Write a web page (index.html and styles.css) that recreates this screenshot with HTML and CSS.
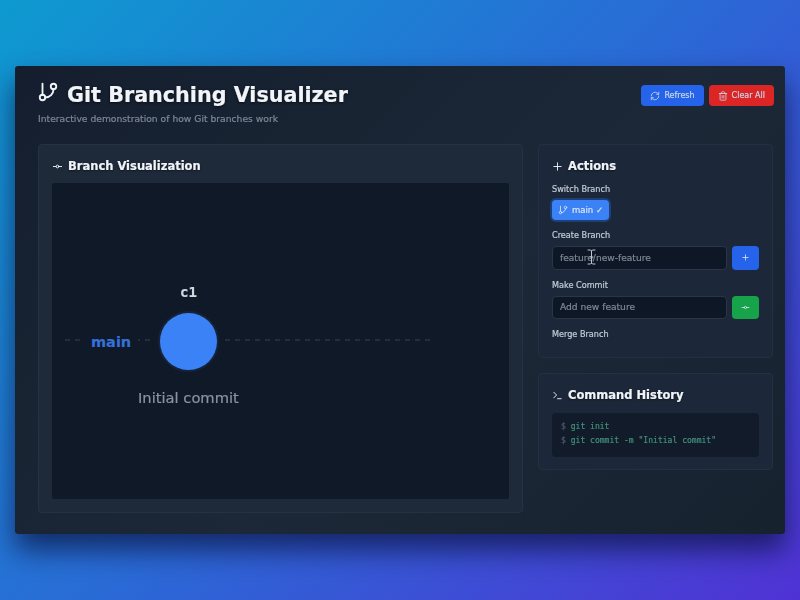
FILE: index.html
```html
<!DOCTYPE html>
<html lang="en">
<head>
  <meta charset="UTF-8" />
  <title>Git Branching Visualizer</title>
  <link rel="stylesheet" href="styles.css">
</head>
<body>
  <div class="window">
    <header class="top">
      <div>
        <h1>
          <svg class="logo" viewBox="0 0 24 24"><circle cx="18" cy="6" r="3"/><circle cx="6" cy="18" r="3"/><path d="M6 15V3"/><path d="M18 9a9 9 0 0 1-9 9"/></svg>
          Git Branching Visualizer
        </h1>
        <p class="sub">Interactive demonstration of how Git branches work</p>
      </div>
      <div class="top-btns">
        <button class="btn blue">
          <svg class="ico" viewBox="0 0 24 24"><path d="M3 12a9 9 0 0 1 15-6.7L21 8"/><path d="M21 3v5h-5"/><path d="M21 12a9 9 0 0 1-15 6.7L3 16"/><path d="M8 16H3v5"/></svg>
          Refresh
        </button>
        <button class="btn red">
          <svg class="ico" viewBox="0 0 24 24"><path d="M3 6h18"/><path d="M19 6v14a2 2 0 0 1-2 2H7a2 2 0 0 1-2-2V6"/><path d="M8 6V4a2 2 0 0 1 2-2h4a2 2 0 0 1 2 2v2"/><path d="M10 11v6"/><path d="M14 11v6"/></svg>
          Clear All
        </button>
      </div>
    </header>

    <div class="columns">
      <section class="panel viz">
        <h2>
          <svg class="h-ico" viewBox="0 0 24 24"><circle cx="12" cy="12" r="3"/><path d="M3 12h6"/><path d="M15 12h6"/></svg>
          Branch Visualization
        </h2>
        <div class="canvas">
          <div class="track"></div>
          <span class="branch-name">main</span>
          <span class="commit-id">c1</span>
          <div class="commit"></div>
          <span class="commit-msg">Initial commit</span>
        </div>
      </section>

      <div class="side">
        <section class="panel actions">
          <h2>
            <svg class="h-ico" viewBox="0 0 24 24"><path d="M12 4v16"/><path d="M4 12h16"/></svg>
            Actions
          </h2>
          <label>Switch Branch</label>
          <div class="branches">
            <button class="branch-btn">
              <svg class="ico" viewBox="0 0 24 24"><circle cx="18" cy="6" r="3"/><circle cx="6" cy="18" r="3"/><path d="M6 15V3"/><path d="M18 9a9 9 0 0 1-9 9"/></svg>
              main ✓
            </button>
          </div>
          <label>Create Branch</label>
          <div class="field">
            <input type="text" placeholder="feature/new-feature">
            <button class="add blue">
              <svg class="mini" viewBox="0 0 24 24"><path d="M12 5v14"/><path d="M5 12h14"/></svg>
            </button>
            <svg class="cursor" viewBox="0 0 9 16"><path d="M1 1h2.5L4.500 2l1-1H8M4.500 2v12M1 15h2.500l1-1 1 1H8M3 8h3"/></svg>
          </div>
          <label>Make Commit</label>
          <div class="field">
            <input type="text" placeholder="Add new feature">
            <button class="add green">
              <svg class="mini" viewBox="0 0 24 24"><circle cx="12" cy="12" r="3"/><path d="M3 12h6"/><path d="M15 12h6"/></svg>
            </button>
          </div>
          <label class="last">Merge Branch</label>
        </section>

        <section class="panel history">
          <h2>
            <svg class="h-ico" viewBox="0 0 24 24"><path d="M4 17l6-6-6-6"/><path d="M12 19h8"/></svg>
            Command History
          </h2>
          <div class="log">
            <div><span class="dollar">$</span> git init</div>
            <div><span class="dollar">$</span> git commit -m "Initial commit"</div>
          </div>
        </section>
      </div>
    </div>
  </div>
</body>
</html>
```

FILE: styles.css
```css
* {
  box-sizing: border-box;
}
html, body {
  height: 100%;
}
body {
  margin: 0;
  padding: 66px 15px;
  font-family: 'DejaVu Sans', sans-serif;
  background: linear-gradient(135deg, #0e9ad0 0%, #2a6ad6 50%, #5032d4 100%);
  color: #f1f5f9;
}
svg {
  fill: none;
  stroke: currentColor;
  stroke-width: 2;
  stroke-linecap: round;
  stroke-linejoin: round;
  flex: none;
}
.window {
  height: 468px;
  padding: 15px 23px;
  background: linear-gradient(135deg, #141e2e 0%, #1c2837 55%, #17222f 100%);
  border-radius: 3px;
  box-shadow: 0 16px 28px rgba(10, 16, 60, 0.7);
  filter: blur(0.3px);
  -webkit-text-stroke: 0.2px;
}
.top {
  display: flex;
  justify-content: space-between;
  align-items: flex-start;
  height: 63px;
}
h1 {
  margin: 0;
  display: flex;
  align-items: center;
  gap: 8px;
  font-size: 20.700px;
  line-height: 28px;
  text-shadow: 0 1px 3px rgba(0, 0, 0, 0.6);
}
.logo {
  width: 22px;
  height: 22px;
  margin: -6px 0 0 -1px;
}
.sub {
  margin: 4px 0 0;
  font-size: 9.200px;
  color: #7d8797;
}
.top-btns {
  display: flex;
  gap: 5px;
  margin-top: 4px;
  margin-right: -12px;
}
.btn {
  display: flex;
  align-items: center;
  gap: 4px;
  height: 21px;
  padding: 0 9px;
  border: none;
  border-radius: 4px;
  font: 8px 'DejaVu Sans', sans-serif;
  color: #c9d5ea;
}
.ico {
  width: 10px;
  height: 10px;
}
.blue {
  background: #2563eb;
}
.red {
  background: #dc2626;
}
.green {
  background: #16a34a;
}
.columns {
  display: flex;
  gap: 15px;
  margin-right: -11px;
}
.panel {
  background: #1e2a3a;
  border: 1px solid #263243;
  border-radius: 4px;
  padding: 13px;
}
h2 {
  margin: 0;
  display: flex;
  align-items: center;
  gap: 5px;
  font-size: 11.500px;
  line-height: 17px;
  text-shadow: 0 1px 2px rgba(0, 0, 0, 0.5);
}
.h-ico {
  width: 11px;
  height: 11px;
}
.viz {
  width: 485px;
  height: 369px;
}
.canvas {
  position: relative;
  height: 316px;
  margin-top: 8px;
  background: #0f1927;
  border-radius: 2px;
}
.track {
  position: absolute;
  left: 13px;
  top: 156px;
  width: 365px;
  height: 2px;
  background: repeating-linear-gradient(90deg, #232e3d 0 5px, transparent 5px 10px);
}
.branch-name {
  position: absolute;
  left: 32px;
  top: 151px;
  padding: 0 7px;
  background: #0f1927;
  font-size: 14.500px;
  font-weight: bold;
  color: #3571d6;
}
.commit-id {
  position: absolute;
  left: 128px;
  top: 101px;
  font: bold 14px 'DejaVu Sans Mono', monospace;
  color: #d3d9e2;
}
.commit {
  position: absolute;
  left: 108px;
  top: 130px;
  width: 57px;
  height: 57px;
  background: #3b82f6;
  border-radius: 50%;
  box-shadow: 0 0 0 2px #16243a, 0 0 0 8px #0f1927;
}
.commit-msg {
  position: absolute;
  left: 86px;
  top: 206px;
  font-size: 14.700px;
  color: #8a93a1;
}
.side {
  width: 235px;
  display: flex;
  flex-direction: column;
  gap: 15px;
}
.side .panel {
  background: #1c2839;
  border-color: #243040;
}
.actions {
  height: 214px;
}
.history {
  height: 97px;
}
label {
  display: block;
  margin-top: 9px;
  font-size: 8.150px;
  line-height: 12px;
  color: #c5ccd7;
}
.actions h2 + label {
  margin-top: 8px;
}
.branches {
  margin-top: 5px;
}
.branch-btn {
  display: inline-flex;
  align-items: center;
  gap: 4px;
  height: 20px;
  padding: 0 6px;
  border: none;
  border-radius: 4px;
  background: #3b82f6;
  box-shadow: 0 0 0 2px #1d4078;
  font: 8.500px 'DejaVu Sans', sans-serif;
  color: #d8e4f8;
}
.field {
  position: relative;
  display: flex;
  gap: 5px;
  margin-top: 5px;
}
input {
  flex: 1;
  min-width: 0;
  height: 23.500px;
  padding: 0 7px;
  background: #0e1726;
  border: 1px solid #2a3646;
  border-radius: 4px;
  font: 9.100px 'DejaVu Sans', sans-serif;
  color: #e2e8f0;
}
input::placeholder {
  color: #7f8998;
}
.add {
  width: 27px;
  height: 23.500px;
  padding: 0;
  border: none;
  border-radius: 4px;
  color: #e8eefa;
  display: flex;
  align-items: center;
  justify-content: center;
}
.mini {
  width: 9px;
  height: 9px;
}
.cursor {
  position: absolute;
  left: 35px;
  top: 3px;
  width: 9px;
  height: 16px;
  stroke: #c4c8ce;
  stroke-width: 1;
}
.log {
  margin-top: 9px;
  padding: 7px 9px;
  height: 44px;
  background: #111b29;
  border-radius: 4px;
  font: 8.050px/14px 'DejaVu Sans Mono', monospace;
  color: #43907a;
}
.dollar {
  color: #4f5968;
}
```
